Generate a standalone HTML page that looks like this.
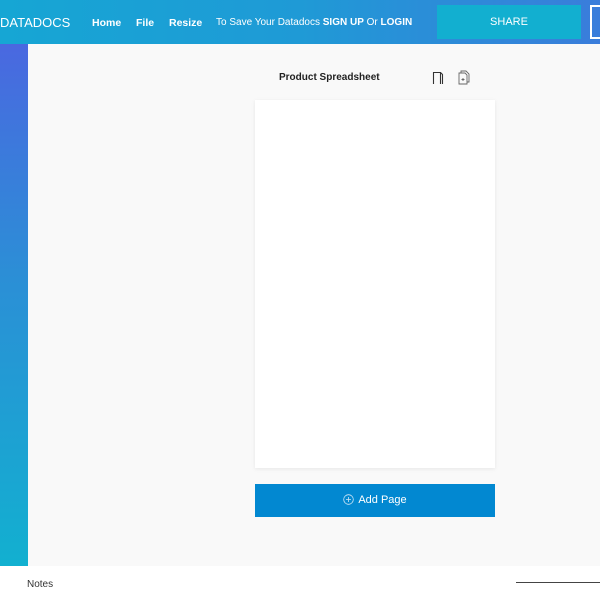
<!DOCTYPE html>
<html><head><meta charset="utf-8"><style>
*{margin:0;padding:0;box-sizing:border-box}
body{width:600px;height:600px;overflow:hidden;font-family:"Liberation Sans",sans-serif;background:#f9f9f9;position:relative}
.hdr{position:absolute;left:0;top:0;width:600px;height:44px;background:linear-gradient(90deg,#16a6d4 0%,#1f9ad6 50%,#3a7ddb 100%);color:#fff}
.hdr span{position:absolute;top:17px;font-size:10.5px}
.side{position:absolute;left:0;top:44px;width:28px;height:522px;background:linear-gradient(180deg,#4a68e0 0%,#2b8fd6 45%,#12b0d0 100%)}
.foot{position:absolute;left:0;top:566px;width:600px;height:34px;background:#fff}
</style></head><body>
<div class="hdr">
<span style="left:0;top:15px;font-size:13px">DATADOCS</span>
<span style="left:92px;font-weight:bold">Home</span>
<span style="left:136px;font-weight:bold">File</span>
<span style="left:169px;font-weight:bold">Resize</span>
<span style="left:216px;font-size:10px;top:17px">To Save Your Datadocs <b>SIGN UP</b> Or <b>LOGIN</b></span>
<div style="position:absolute;left:437px;top:5px;width:144px;height:34px;background:#12afd0;text-align:center;line-height:34px;font-size:11px">SHARE</div>
<div style="position:absolute;left:590px;top:5px;width:20px;height:34px;border:2px solid #fff"></div>
</div>
<div class="side"></div>
<div style="position:absolute;left:279px;top:72px;font-size:10px;font-weight:bold;color:#222">Product Spreadsheet</div>
<svg style="position:absolute;left:432px;top:71px" width="12" height="14" viewBox="0 0 12 14"><path d="M1.5 13V1.5H8.5V13M8.5 1.5L10.5 3.5V13" fill="none" stroke="#333" stroke-width="1.1"/></svg>
<svg style="position:absolute;left:458px;top:70px" width="13" height="15" viewBox="0 0 13 15"><path d="M3 3V1H8L11 4V12H9M1 3H7L9 5V14H1Z" fill="none" stroke="#666" stroke-width="0.9"/><path d="M5 8V11M3.5 9.5H6.5" stroke="#666" stroke-width="0.9"/></svg>
<div style="position:absolute;left:255px;top:100px;width:240px;height:368px;background:#fff;box-shadow:0 1px 4px rgba(0,0,0,.08)"></div>
<div style="position:absolute;left:255px;top:484px;width:240px;height:33px;background:#0288d1;color:#fff;font-size:11px;text-align:center;line-height:33px">
<svg style="vertical-align:-2px;margin-right:4px" width="11" height="11" viewBox="0 0 11 11"><circle cx="5.5" cy="5.5" r="4.8" fill="none" stroke="#cfe6f6" stroke-width="0.8"/><path d="M5.5 3V8M3 5.5H8" stroke="#cfe6f6" stroke-width="0.8"/></svg>Add Page</div>
<div class="foot">
<span style="position:absolute;left:27px;top:13px;font-size:10px;color:#333">Notes</span>
<div style="position:absolute;left:516px;top:16px;width:84px;height:1px;background:#444"></div>
</div>
</body></html>
